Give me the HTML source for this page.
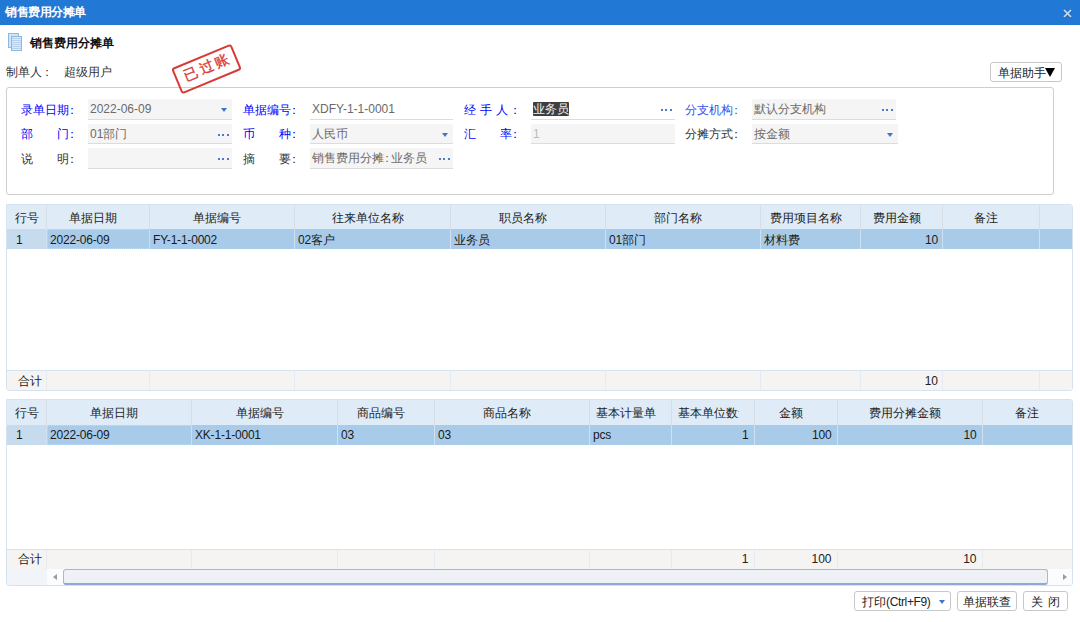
<!DOCTYPE html>
<html><head><meta charset="utf-8">
<style>
*{box-sizing:border-box;margin:0;padding:0}
html,body{width:1080px;height:622px;overflow:hidden;background:#fff;font-family:"Liberation Sans",sans-serif;font-size:12px;color:#222}
.a{position:absolute;white-space:nowrap}
#title{position:absolute;left:0;top:0;width:1080px;height:25px;background:#2278d5}
#title .t{left:5px;top:4px;color:#fff;font-weight:bold;font-size:12px;line-height:16px;letter-spacing:-0.5px}
#title .x{left:1062px;top:4px;color:#dfe8f2;font-size:13px;line-height:16px}
.lbl{position:absolute;line-height:16px;color:#333;white-space:nowrap}
.blue{color:#0000ff}
.inp{position:absolute;height:21px;background:#f5f5f5;border-bottom:1px solid #dcdcdc;color:#6a6a6a;line-height:16px;padding:2px 0 0 2px;white-space:nowrap;overflow:hidden}
.dots{position:absolute;right:3px;top:10px;width:11px;height:2px;background:
 linear-gradient(90deg,#4a7ccb 0,#4a7ccb 2px,transparent 2px,transparent 4.5px,#4a7ccb 4.5px,#4a7ccb 6.5px,transparent 6.5px,transparent 9px,#4a7ccb 9px,#4a7ccb 11px)}
.tri{position:absolute;right:5px;top:9px;width:0;height:0;border-left:3px solid transparent;border-right:3px solid transparent;border-top:4px solid #3d78c2}
.btn{position:absolute;border:1px solid #c8c8c8;border-radius:3px;background:#fff;line-height:20px;text-align:center;color:#222;white-space:nowrap}
.grid{position:absolute;border:1px solid #d5e3f1;border-radius:0 3px 3px 3px;overflow:hidden;background:#fff}
.focus{outline:1px dotted #c9dbec;outline-offset:-1px}
.hdr{position:absolute;left:0;top:0;width:100%;background:#dfebf7;border-bottom:1px solid #d6dadf}
.hc{position:absolute;top:0;height:24px;border-right:1px solid #d6dde5;line-height:16px;padding-top:5px;text-align:center;white-space:nowrap;overflow:hidden;color:#222}
.row{position:absolute;left:0;width:100%;height:20px;background:#a9cbea}
.rc{position:absolute;top:0;height:20px;border-right:1px solid #cfe0f0;line-height:16px;letter-spacing:-0.2px;padding:3px 4px 0 3px;white-space:nowrap;overflow:hidden;color:#1a1a1a}
.sum{position:absolute;left:0;width:100%;height:20px;background:#f5f4f2;border-top:1px solid #d5e3f1}
.sc{position:absolute;top:0;height:19px;border-right:1px solid #e4ebf2;line-height:16px;padding:1px 4px 0 3px;white-space:nowrap;overflow:hidden;color:#222}
.r{text-align:right}
.co{position:relative;left:-3px}
</style></head><body>
<div id="title"><div class="a t">销售费用分摊单</div><svg class="a" style="left:1062px;top:8px" width="11" height="11" viewBox="0 0 11 11"><path d="M2 2.8 L9 9.8 M9 2.8 L2 9.8" stroke="#33475c" stroke-width="1.8" opacity="0.5"/><path d="M2 2 L9 9 M9 2 L2 9" stroke="#c9ddf2" stroke-width="1.7"/></svg></div>

<div class="a" style="left:8px;top:33px;width:11px;height:15px;border:1px solid #8db8e2;background:#d3e4f5"></div>
<div class="a" style="left:11px;top:36px;width:11px;height:15px;border:1px solid #8db8e2;background:repeating-linear-gradient(180deg,#dde9f6 0,#dde9f6 1px,#b4d0ec 1px,#b4d0ec 2px)"></div>
<div class="lbl" style="left:30px;top:35px;font-weight:bold;color:#111">销售费用分摊单</div>

<div class="lbl" style="left:6px;top:64px">制单人<span class="co" style="left:-1px">：</span></div>
<div class="lbl" style="left:64px;top:64px">超级用户</div>

<div class="btn" style="left:990px;top:62px;width:72px;height:20px"><span style="position:absolute;left:7px;top:0">单据助手</span><span style="position:absolute;left:54px;top:5px;width:0;height:0;border-left:5px solid transparent;border-right:5px solid transparent;border-top:9px solid #000"></span></div>

<div class="a" style="left:6px;top:87px;width:1048px;height:108px;border:1px solid #cfcdcf;border-radius:3px"></div>

<!-- row 1 -->
<div class="lbl blue" style="left:21px;top:102px">录单日期<span class="co">：</span></div>
<div class="inp" style="left:88px;top:99px;width:144px">2022-06-09<span class="tri"></span></div>
<div class="lbl blue" style="left:243px;top:102px">单据编号<span class="co">：</span></div>
<div class="inp" style="left:310px;top:99px;width:143px;background:#fff">XDFY-1-1-0001</div>
<div class="lbl blue" style="left:464px;top:102px;letter-spacing:4px">经手人<span class="co">：</span></div>
<div class="inp" style="left:531px;top:99px;width:144px;background:#fff"><span style="background:#3e3e3e;color:#f4f4f4;border-radius:1px">业务员</span><span class="dots"></span></div>
<div class="lbl blue" style="left:685px;top:102px;color:#3355ee">分支机构<span class="co">：</span></div>
<div class="inp" style="left:752px;top:99px;width:144px">默认分支机构<span class="dots"></span></div>

<!-- row 2 -->
<div class="lbl blue" style="left:21px;top:126px">部　　门<span class="co">：</span></div>
<div class="inp" style="left:88px;top:124px;height:20px;width:144px">01部门<span class="dots"></span></div>
<div class="lbl blue" style="left:243px;top:126px">币　　种<span class="co">：</span></div>
<div class="inp" style="left:310px;top:124px;height:20px;width:143px">人民币<span class="tri"></span></div>
<div class="lbl blue" style="left:464px;top:126px">汇　　率<span class="co">：</span></div>
<div class="inp" style="left:531px;top:124px;height:20px;width:144px;color:#bbb">1</div>
<div class="lbl" style="left:685px;top:126px">分摊方式<span class="co">：</span></div>
<div class="inp" style="left:752px;top:124px;height:20px;width:146px">按金额<span class="tri"></span></div>

<!-- row 3 -->
<div class="lbl" style="left:21px;top:151px">说　　明<span class="co">：</span></div>
<div class="inp" style="left:88px;top:148px;width:144px"><span class="dots"></span></div>
<div class="lbl" style="left:243px;top:151px">摘　　要<span class="co">：</span></div>
<div class="inp" style="left:310px;top:148px;width:143px">销售费用分摊<span style="margin:0 -2px 0 -3px">：</span>业务员<span class="dots"></span></div>

<!-- stamp -->
<div class="a" style="left:174px;top:55px;width:65px;height:28px;border:2px solid #d93a36;border-radius:3px;transform:rotate(-22.5deg);color:#d93a36;font-family:'Liberation Serif',serif;font-size:14px;line-height:22px;text-align:center;letter-spacing:3px;text-indent:4px;-webkit-text-stroke:0.35px #d93a36">已过账</div>

<div class="grid" style="left:6px;top:204px;width:1067px;height:187px">
 <div class="hdr" style="height:25px">
  <div class="hc" style="left:0px;width:40px;height:24px;">行号</div>
  <div class="hc" style="left:40px;width:103px;height:24px;padding-left:6px;padding-right:16px;">单据日期</div>
  <div class="hc" style="left:143px;width:145px;height:24px;padding-left:6px;padding-right:16px;">单据编号</div>
  <div class="hc" style="left:288px;width:156px;height:24px;padding-left:6px;padding-right:16px;">往来单位名称</div>
  <div class="hc" style="left:444px;width:155px;height:24px;padding-left:6px;padding-right:16px;">职员名称</div>
  <div class="hc" style="left:599px;width:155px;height:24px;padding-left:6px;padding-right:16px;">部门名称</div>
  <div class="hc" style="left:754px;width:100px;height:24px;padding-left:6px;padding-right:16px;">费用项目名称</div>
  <div class="hc" style="left:854px;width:82px;height:24px;padding-left:6px;padding-right:16px;">费用金额</div>
  <div class="hc" style="left:936px;width:97px;height:24px;padding-left:6px;padding-right:16px;">备注</div>
  <div class="hc" style="left:1033px;width:32px;height:24px;padding-left:6px;padding-right:16px;border-right:0;"></div>
 </div>
 <div class="row" style="top:24px">
  <div class="rc" style="left:0px;width:40px;padding-top:3px;background:#c7dbef;padding-left:9px;">1</div>
  <div class="rc focus" style="left:40px;width:103px;padding-top:3px;">2022-06-09</div>
  <div class="rc" style="left:143px;width:145px;padding-top:3px;">FY-1-1-0002</div>
  <div class="rc" style="left:288px;width:156px;padding-top:3px;">02客户</div>
  <div class="rc" style="left:444px;width:155px;padding-top:3px;">业务员</div>
  <div class="rc" style="left:599px;width:155px;padding-top:3px;">01部门</div>
  <div class="rc" style="left:754px;width:100px;padding-top:3px;">材料费</div>
  <div class="rc r" style="left:854px;width:82px;padding-top:3px;padding-right:4px;">10</div>
  <div class="rc" style="left:936px;width:97px;padding-top:3px;"></div>
  <div class="rc" style="left:1033px;width:32px;border-right:0;padding-top:3px;"></div>
 </div>
 <div class="sum" style="top:165px">
  <div class="sc" style="left:0px;width:40px;padding-top:2px;text-align:right;padding-right:4px;">合计</div>
  <div class="sc" style="left:40px;width:103px;padding-top:2px;"></div>
  <div class="sc" style="left:143px;width:145px;padding-top:2px;"></div>
  <div class="sc" style="left:288px;width:156px;padding-top:2px;"></div>
  <div class="sc" style="left:444px;width:155px;padding-top:2px;"></div>
  <div class="sc" style="left:599px;width:155px;padding-top:2px;"></div>
  <div class="sc" style="left:754px;width:100px;padding-top:2px;"></div>
  <div class="sc r" style="left:854px;width:82px;padding-top:2px;padding-right:4px;">10</div>
  <div class="sc" style="left:936px;width:97px;padding-top:2px;"></div>
  <div class="sc" style="left:1033px;width:32px;border-right:0;padding-top:2px;"></div>
 </div>
</div>
<div class="grid" style="left:6px;top:399px;width:1067px;height:187px">
 <div class="hdr" style="height:26px">
  <div class="hc" style="left:0px;width:40px;height:25px;">行号</div>
  <div class="hc" style="left:40px;width:145px;height:25px;padding-left:6px;padding-right:16px;">单据日期</div>
  <div class="hc" style="left:185px;width:146px;height:25px;padding-left:6px;padding-right:16px;">单据编号</div>
  <div class="hc" style="left:331px;width:97px;height:25px;padding-left:6px;padding-right:16px;">商品编号</div>
  <div class="hc" style="left:428px;width:155px;height:25px;padding-left:6px;padding-right:16px;">商品名称</div>
  <div class="hc" style="left:583px;width:82px;height:25px;text-align:left;padding-left:6px;"><div style="width:60px;overflow:hidden">基本计量单位</div></div>
  <div class="hc" style="left:665px;width:83px;height:25px;text-align:left;padding-left:6px;"><div style="width:61px;overflow:hidden">基本单位数量</div></div>
  <div class="hc" style="left:748px;width:83px;height:25px;padding-left:6px;padding-right:16px;">金额</div>
  <div class="hc" style="left:831px;width:145px;height:25px;padding-left:6px;padding-right:16px;">费用分摊金额</div>
  <div class="hc" style="left:976px;width:89px;height:25px;padding-left:6px;padding-right:8px;border-right:0;">备注</div>
 </div>
 <div class="row" style="top:25px">
  <div class="rc" style="left:0px;width:40px;padding-top:2px;background:#c7dbef;padding-left:9px;">1</div>
  <div class="rc focus" style="left:40px;width:145px;padding-top:2px;">2022-06-09</div>
  <div class="rc" style="left:185px;width:146px;padding-top:2px;">XK-1-1-0001</div>
  <div class="rc" style="left:331px;width:97px;padding-top:2px;">03</div>
  <div class="rc" style="left:428px;width:155px;padding-top:2px;">03</div>
  <div class="rc" style="left:583px;width:82px;padding-top:2px;">pcs</div>
  <div class="rc r" style="left:665px;width:83px;padding-top:2px;padding-right:5.5px;">1</div>
  <div class="rc r" style="left:748px;width:83px;padding-top:2px;padding-right:5.5px;">100</div>
  <div class="rc r" style="left:831px;width:145px;padding-top:2px;padding-right:5.5px;">10</div>
  <div class="rc" style="left:976px;width:89px;border-right:0;padding-top:2px;"></div>
 </div>
 <div class="sum" style="top:149px">
  <div class="sc" style="left:0px;width:40px;padding-top:1px;text-align:right;padding-right:4px;">合计</div>
  <div class="sc" style="left:40px;width:145px;padding-top:1px;"></div>
  <div class="sc" style="left:185px;width:146px;padding-top:1px;"></div>
  <div class="sc" style="left:331px;width:97px;padding-top:1px;"></div>
  <div class="sc" style="left:428px;width:155px;padding-top:1px;"></div>
  <div class="sc" style="left:583px;width:82px;padding-top:1px;"></div>
  <div class="sc r" style="left:665px;width:83px;padding-top:1px;padding-right:5.5px;">1</div>
  <div class="sc r" style="left:748px;width:83px;padding-top:1px;padding-right:5.5px;">100</div>
  <div class="sc r" style="left:831px;width:145px;padding-top:1px;padding-right:5.5px;">10</div>
  <div class="sc" style="left:976px;width:89px;border-right:0;padding-top:1px;"></div>
 </div>
 <div class="a" style="left:0;top:169px;width:1065px;height:16px;background:#f1f4f8"></div>
 <div class="a" style="left:40px;top:169px;width:1025px;height:16px;background:#fbfcfd"></div>
 <div class="a" style="left:46px;top:174px;width:0;height:0;border-top:3.5px solid transparent;border-bottom:3.5px solid transparent;border-right:4px solid #9a9a9a"></div>
 <div class="a" style="left:56px;top:169px;width:985px;height:16px;border:1px solid #a3b8de;border-bottom:2px solid #8fa8d8;border-radius:3px;background:#eef2f6"></div>
 <div class="a" style="left:1056px;top:174px;width:0;height:0;border-top:3.5px solid transparent;border-bottom:3.5px solid transparent;border-left:4px solid #9a9a9a"></div>
</div>
<div class="btn" style="left:854px;top:591px;width:97px;height:20px;text-align:left;padding-left:7px">打印<span style="letter-spacing:-0.35px">(Ctrl+F9)</span><span class="tri" style="right:5px;top:8px"></span></div>
<div class="btn" style="left:957px;top:591px;width:60px;height:20px">单据联查</div>
<div class="btn" style="left:1023px;top:591px;width:45px;height:20px">关<span style="margin-left:5px">闭</span></div>
</body></html>
